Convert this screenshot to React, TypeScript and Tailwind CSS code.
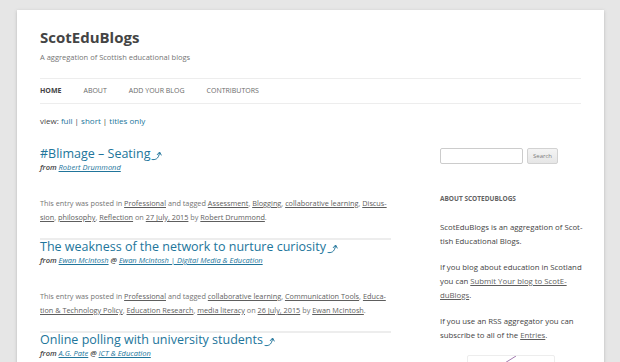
const posts = [
  {
    title: 'The weakness of the network to nurture curiosity',
  },
];

function Arrow() {
  return (
    <svg className="inline-block w-[12px] h-[11px] ml-[1px] -mb-[1px]" viewBox="0 0 12 11" fill="none" stroke="#21759b" strokeWidth="1" strokeLinecap="round" strokeLinejoin="round">
      <path d="M1 9.5 C4 10 7.5 9.5 8.5 3" />
      <path d="M6.3 4.6 L8.6 2 L10.2 5" />
    </svg>
  );
}

function Post({
  title,
  from,
  meta,
  last,
}: {
  title: string;
  from: React.ReactNode;
  meta?: React.ReactNode;
  last?: boolean;
}) {
  return (
    <article className={last ? '' : 'border-b-2 border-[#ededed]'}>
      <h2 className="text-[12.5px] leading-[14px] text-[#21759b]">
        {title}
        <Arrow />
      </h2>
      <div className="mt-[1px] text-[7.5px] leading-[10px] italic font-semibold text-[#444]">
        from {from}
      </div>
      {meta && (
        <p className="mt-[24px] mb-[14px] text-[7.3px] leading-[14px] text-[#757575]">{meta}</p>
      )}
    </article>
  );
}

const A = ({ children }: { children: React.ReactNode }) => (
  <a className="underline text-[#21759b] font-normal">{children}</a>
);
const M = ({ children }: { children: React.ReactNode }) => (
  <a className="underline text-[#5e5e5e]">{children}</a>
);

export default function App() {
  return (
    <div className="h-[362px] overflow-hidden bg-[#e6e6e6] pl-[17px] pt-[10px] font-['Open_Sans',sans-serif]">
      <div className="w-[587px] min-h-[400px] bg-white px-[23px] pt-[18px] shadow-[0_1px_3px_rgba(100,100,100,0.35)]">
        <header>
          <h1 className="text-[15px] leading-[18px] font-bold text-[#444]">ScotEduBlogs</h1>
          <p className="mt-[6px] text-[7.5px] leading-[10px] text-[#757575]">
            A aggregation of Scottish educational blogs
          </p>
          <nav className="mt-[16px] h-[26px] border-y border-[#ededed] flex items-center gap-[22px] text-[7px] uppercase text-[#6a6a6a]">
            <span className="font-bold text-[#444]">Home</span>
            <span>About</span>
            <span>Add your blog</span>
            <span>Contributors</span>
          </nav>
        </header>
        <div className="flex">
          <main className="w-[351px]">
            <p className="mt-[11px] text-[8px] leading-[12px] text-[#444]">
              view: <a className="text-[#21759b]">full</a> | <a className="text-[#21759b]">short</a> |{' '}
              <a className="text-[#21759b]">titles only</a>
            </p>
            <div className="mt-[20px]">
              <Post
                title="#Blimage – Seating"
                from={<A>Robert Drummond</A>}
                meta={
                  <>
                    This entry was posted in <M>Professional</M> and tagged <M>Assessment</M>, <M>Blogging</M>,{' '}
                    <M>collaborative learning</M>, <M>Discus-<br />sion</M>, <M>philosophy</M>, <M>Reflection</M> on{' '}
                    <M>27 July, 2015</M> by <M>Robert Drummond</M>.
                  </>
                }
              />
              <Post
                title={posts[0].title}
                from={
                  <>
                    <A>Ewan McIntosh</A> @ <A>Ewan McIntosh | Digital Media &amp; Education</A>
                  </>
                }
                meta={
                  <>
                    This entry was posted in <M>Professional</M> and tagged <M>collaborative learning</M>,{' '}
                    <M>Communication Tools</M>, <M>Educa-<br />tion &amp; Technology Policy</M>, <M>Education Research</M>,{' '}
                    <M>media literacy</M> on <M>26 July, 2015</M> by <M>Ewan McIntosh</M>.
                  </>
                }
              />
              <Post
                title="Online polling with university students"
                from={
                  <>
                    <A>A.G. Pate</A> @ <A>ICT &amp; Education</A>
                  </>
                }
                last
              />
            </div>
          </main>
          <aside className="ml-auto w-[141px] pt-[44px] text-[7.8px] leading-[14px] text-[#444] whitespace-nowrap">
            <div className="flex gap-[4px]">
              <div className="w-[83px] h-[16px] border border-[#ccc] rounded-[2px]" />
              <button className="w-[31px] h-[16px] border border-[#d2d2d2] rounded-[2px] bg-gradient-to-b from-[#f4f4f4] to-[#e6e6e6] text-[6px] text-[#7c7c7c]">
                Search
              </button>
            </div>
            <h3 className="mt-[30px] text-[6.5px] leading-[10px] font-bold uppercase text-[#636363]">About ScotEduBlogs</h3>
            <p className="mt-[16px]">
              ScotEduBlogs is an aggregation of Scot-
              <br />
              tish Educational Blogs.
            </p>
            <p className="mt-[12px]">
              If you blog about education in Scotland
              <br />
              you can <M>Submit Your blog to ScotE-<br />duBlogs</M>.
            </p>
            <p className="mt-[12px]">
              If you use an RSS aggregator you can
              <br />
              subscribe to all of the <M>Entries</M>.
            </p>
            <div className="mt-[13px] ml-[27px] w-[88px] h-[20px] border border-[#ededed] rounded-[2px] relative overflow-hidden">
              <svg className="absolute left-[30px] top-0 w-[20px] h-[10px]" viewBox="0 0 20 10">
                <path d="M2 10 L18 0" stroke="#a37bb0" strokeWidth="1" />
              </svg>
            </div>
          </aside>
        </div>
      </div>
    </div>
  );
}
